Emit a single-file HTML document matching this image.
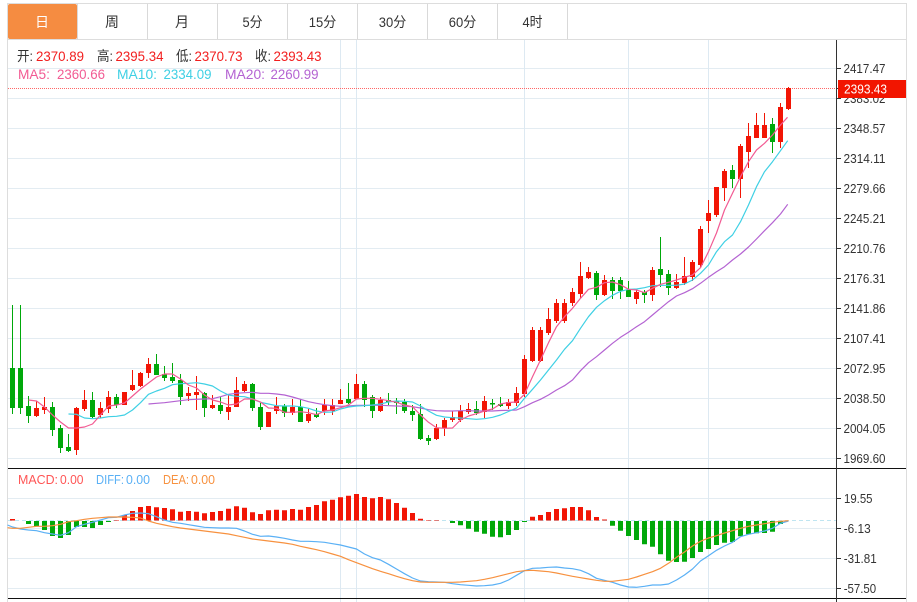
<!DOCTYPE html>
<html><head><meta charset="utf-8"><style>
html,body{margin:0;padding:0;background:#fff;width:917px;height:602px;overflow:hidden}
svg{display:block}
text{font-family:"Liberation Sans","Noto Sans CJK SC",sans-serif}
.t{font-size:14px;fill:#333;text-anchor:middle}
.l{font-size:14px}
.a{font-size:13px;fill:#333}
.m{font-size:13px}
</style></head><body>
<svg width="917" height="602" viewBox="0 0 917 602" xmlns="http://www.w3.org/2000/svg">
<rect width="917" height="602" fill="#fff"/>
<!-- grid -->
<path d="M8 68.5H836M8 98.5H836M8 128.5H836M8 158.5H836M8 188.5H836M8 218.5H836M8 248.5H836M8 278.5H836M8 308.5H836M8 338.5H836M8 368.5H836M8 398.5H836M8 428.5H836M8 458.5H836M8 498.5H836M8 528.5H836M8 558.5H836M8 588.5H836" stroke="#e3ecf2" fill="none"/>
<path d="M340.5 40V602M356.5 40V602M524.5 40V602M628.5 40V602M708.5 40V602" stroke="#dde9f2" fill="none"/>
<!-- tabs -->
<path d="M7 3.5H906.5M7 39.5H906.5M7.5 3V602M906.5 3V602" stroke="#ddd" fill="none"/>
<path d="M147.5 4V39M217.5 4V39M287.5 4V39M357.5 4V39M427.5 4V39M497.5 4V39M567.5 4V39M77.5 4V39" stroke="#d9d9d9" fill="none"/>
<rect x="8" y="4" width="69" height="35" rx="2" fill="#f58c41"/>
<text class="t" x="42" y="27" style="fill:#fff">日</text>
<text class="t" x="112" y="27">周</text>
<text class="t" x="182" y="27">月</text>
<text class="t" x="252.5" y="27" textLength="20" lengthAdjust="spacingAndGlyphs">5分</text>
<text class="t" x="322.5" y="27" textLength="27.5" lengthAdjust="spacingAndGlyphs">15分</text>
<text class="t" x="392.5" y="27" textLength="27.5" lengthAdjust="spacingAndGlyphs">30分</text>
<text class="t" x="462.5" y="27" textLength="27.5" lengthAdjust="spacingAndGlyphs">60分</text>
<text class="t" x="532.5" y="27" textLength="20" lengthAdjust="spacingAndGlyphs">4时</text>
<!-- dotted price line -->
<path d="M8 88.5H836" stroke="#f66" stroke-dasharray="1 1" fill="none"/>
<!-- candles -->
<g fill="none" stroke="#00a80a">
<path stroke-width="1" d="M12.5 305V414M20.5 305V414M28.5 396V423M52.5 402V436M60.5 425V453M68.5 434V452M92.5 392V418M116.5 394V408M156.5 354V375M164.5 366V381M172.5 363V383M180.5 374V405M204.5 392V417M220.5 397V414M252.5 383V411M260.5 403V430M284.5 404V417M300.5 399V422M316.5 408V418M348.5 383V404M364.5 381V407M372.5 395V418M388.5 393V405M396.5 398V414M404.5 399V413M412.5 405V421M420.5 404V440M428.5 435V445M476.5 401V415M492.5 399V410M500.5 397V407M596.5 271V300M612.5 277V299M620.5 277V299M628.5 281V297M644.5 290V303M660.5 237V287M668.5 270V295M732.5 165V188M772.5 118V153"/>
<path stroke-width="5" d="M12.5 368V408M20.5 368V408M28.5 406V416M52.5 407V430M60.5 428V448M68.5 447V451M92.5 400V417M116.5 397V405M156.5 364V375M164.5 374V378M172.5 377V381M180.5 380V397M204.5 393V408M220.5 405V411M252.5 384V408M260.5 407V427M284.5 406V413M300.5 407V422M316.5 414V417M348.5 399V403M364.5 384V400M372.5 397V411M388.5 400V402M396.5 401V403M404.5 402V411M412.5 411V415M420.5 414V439M428.5 438V441M476.5 409V413M492.5 403V404.5M500.5 404V406M596.5 273V295M612.5 280V291M620.5 280V291M628.5 290V297M644.5 292V295M660.5 269V275M668.5 274V288M732.5 170V179M772.5 124V142"/>
</g>
<g fill="none" stroke="#f21505">
<path stroke-width="1" d="M36.5 401V417M44.5 397V414M76.5 407V455M84.5 390V411M100.5 402V418M108.5 391V413M124.5 392V405M132.5 370V391M140.5 372V387M148.5 358V378M188.5 387V401M196.5 376V410M212.5 395V409M228.5 395V420M236.5 377V407M244.5 381V392M268.5 412V427M276.5 397V414M292.5 399V415M308.5 409V423M324.5 399V415M332.5 399V415M340.5 389V404M356.5 374V399M380.5 397V412M436.5 424V440M444.5 418V436M452.5 411V422M460.5 405V422M468.5 403V414M484.5 396V418M508.5 399V409M516.5 387V406M524.5 355V397M532.5 327V362M540.5 327V362M548.5 308V335M556.5 299V323M564.5 299V323M572.5 288V306M580.5 262V298M588.5 267V279M604.5 275V296M636.5 290V304M652.5 267V301M676.5 274V289M684.5 257V285M692.5 260V281M700.5 226V268M708.5 200V233M716.5 187V217M724.5 169V201M740.5 144V198M748.5 123V168M756.5 113V138M764.5 113V138M780.5 103V148M788.5 87V110"/>
<path stroke-width="5" d="M36.5 408V416M44.5 407V410M76.5 408V450M84.5 400V409M100.5 408V415M108.5 397V409M124.5 392V405M132.5 385V390M140.5 373V386M148.5 364V373M188.5 393V396M196.5 392V395M212.5 405V408M228.5 407V412M236.5 390V407M244.5 384V391M268.5 412V427M276.5 406V411M292.5 407V413M308.5 414V421M324.5 405V411M332.5 405V411M340.5 400V404M356.5 384V399M380.5 400V411M436.5 428V439M444.5 420V428M452.5 417V420M460.5 411V420M468.5 409V412M484.5 401V412M508.5 402V406M516.5 393V403M524.5 359V394M532.5 330V361M540.5 330V361M548.5 319V333M556.5 303V321M564.5 303V321M572.5 292V303M580.5 276V294M588.5 272V278M604.5 280V295M636.5 292V299M652.5 270V295M676.5 282V288M684.5 276V283M692.5 262V277M700.5 229V265M708.5 213V221M716.5 187V215M724.5 171V188M740.5 146V179M748.5 136V152M756.5 125V138M764.5 125V138M780.5 107V142M788.5 88V109"/>
</g>
<!-- MA lines -->
<g fill="none" stroke-width="1.2" stroke-linejoin="round">
<polyline stroke="#b463d2" points="148.5,404 156.5,403.3 164.5,402.7 172.5,401.7 180.5,400.7 188.5,399.7 196.5,399.3 204.5,399 212.5,398.7 220.5,396.7 228.5,394.3 236.5,393.3 244.5,392.7 252.5,392.3 260.5,393.3 268.5,393.3 276.5,394 284.5,395 292.5,397 300.5,399.3 308.5,401.7 316.5,403.3 324.5,404.7 332.5,405.7 340.5,406.3 348.5,406 356.5,405.3 364.5,405.3 372.5,405.3 380.5,405.3 388.5,405.7 396.5,406 404.5,406.3 412.5,406.7 420.5,408 428.5,409.7 436.5,410.7 444.5,411 452.5,411 460.5,410.7 468.5,410.7 476.5,411 484.5,411 492.5,411 500.5,410.5 508.5,410.3 516.5,410 524.5,406.7 532.5,402.7 540.5,399.3 548.5,395 556.5,390 564.5,385.7 572.5,380 580.5,370.7 588.5,362.7 596.5,356.7 604.5,350 612.5,343.3 620.5,337.3 628.5,332.3 636.5,326.7 644.5,321.7 652.5,315 660.5,308.3 668.5,301.7 676.5,296 684.5,292.7 692.5,288.7 700.5,283.3 708.5,277.3 716.5,271.7 724.5,266.7 732.5,260 740.5,254 748.5,247 756.5,239 764.5,230.7 772.5,222.7 780.5,214 787.7,204.3"/>
<polyline stroke="#3fd0e4" points="68.5,414 76.5,414.3 84.5,418 92.5,418.7 100.5,418 108.5,416.7 116.5,416.3 124.5,415 132.5,410 140.5,402.7 148.5,394.3 156.5,391 164.5,388.3 172.5,384.7 180.5,383.7 188.5,383.3 196.5,382.7 204.5,384 212.5,386 220.5,391 228.5,395 236.5,396.3 244.5,396.7 252.5,399 260.5,402.3 268.5,404 276.5,405.7 284.5,406 292.5,406 300.5,406.7 308.5,408.3 316.5,411 324.5,412.3 332.5,412 340.5,409 348.5,407 356.5,406 364.5,405.7 372.5,405 380.5,404 388.5,402 396.5,401 404.5,401.3 412.5,402 420.5,406 428.5,411 436.5,415.3 444.5,417 452.5,417.7 460.5,418 468.5,418.7 476.5,419.3 484.5,418.7 492.5,417.3 500.5,415 508.5,411.5 516.5,408 524.5,398.3 532.5,389.3 540.5,380 548.5,370 556.5,360 564.5,349.3 572.5,340.7 580.5,328.3 588.5,316.7 596.5,307.3 604.5,300.7 612.5,295.3 620.5,291.3 628.5,289.3 636.5,289 644.5,287.7 652.5,285.7 660.5,285.3 668.5,285.3 676.5,285.3 684.5,284 692.5,280 700.5,273.3 708.5,265 716.5,251.7 724.5,241.7 732.5,235 740.5,221.7 748.5,205 756.5,186.7 764.5,171.7 772.5,161.7 780.5,150.7 787.7,140.7"/>
<polyline stroke="#f25b93" points="28.5,400 36.5,401 44.5,407 52.5,415 60.5,422 68.5,428 76.5,428 84.5,427 92.5,424 100.5,415 108.5,406 116.5,405 124.5,403 132.5,396 140.5,389 148.5,383 156.5,377 164.5,374 172.5,374 180.5,379 188.5,385 196.5,388 204.5,395 212.5,400 220.5,402 228.5,405 236.5,404 244.5,399 252.5,399 260.5,402 268.5,408 276.5,408.3 284.5,412.3 292.5,412.3 300.5,411.7 308.5,412.7 316.5,414.7 324.5,411 332.5,410 340.5,407.7 348.5,405 356.5,399 364.5,398.3 372.5,398.3 380.5,399.3 388.5,400.7 396.5,402.3 404.5,405 412.5,406.7 420.5,415 428.5,422.3 436.5,427.7 444.5,428.3 452.5,428 460.5,420 468.5,416 476.5,413.7 484.5,411 492.5,409 500.5,404 508.5,402.5 516.5,402 524.5,394.3 532.5,376.7 540.5,360 548.5,342.7 556.5,326.7 564.5,316.7 572.5,308.3 580.5,298.3 588.5,289.3 596.5,287.3 604.5,282.7 612.5,282 620.5,284.7 628.5,289.3 636.5,290 644.5,292.7 652.5,288.3 660.5,284.3 668.5,282.3 676.5,280 684.5,277.3 692.5,275 700.5,267.7 708.5,251.7 716.5,233 724.5,210 732.5,193.3 740.5,176.7 748.5,161.7 756.5,150 764.5,143.3 772.5,135 780.5,125 787.5,117.3"/>
</g>
<!-- MACD zero -->
<path d="M8 520.5H836" stroke="#bfe5f1" stroke-dasharray="4 3" fill="none"/>
<!-- MACD bars -->
<path fill="none" stroke="#00a80a" stroke-width="5" d="M28.5 521V524M36.5 521V526M44.5 521V530M52.5 521V536M60.5 521V538M68.5 521V535M76.5 521V527M84.5 521V527M92.5 521V528M100.5 521V525M108.5 521V522M452.5 521V523M460.5 521V525.3M468.5 521V528.7M476.5 521V531.7M484.5 521V533.7M492.5 521V536.7M500.5 521V537.3M508.5 521V535M516.5 521V530M524.5 521V522M612.5 521V525.7M620.5 521V530.7M628.5 521V536M636.5 521V540M644.5 521V544.3M652.5 521V546.7M660.5 521V554.3M668.5 521V560.7M676.5 521V562M684.5 521V561.7M692.5 521V558M700.5 521V552M708.5 521V549M716.5 521V545M724.5 521V542.7M732.5 521V542M740.5 521V536.3M748.5 521V534.3M756.5 521V533.3M764.5 521V533M772.5 521V531.7M780.5 521V524"/>
<path fill="none" stroke="#f21505" stroke-width="5" d="M12.5 519V520.5M116.5 520V520.5M124.5 515V520.5M132.5 511V520.5M140.5 507V520.5M148.5 506V520.5M156.5 507.3V520.5M164.5 508V520.5M172.5 509.3V520.5M180.5 511.7V520.5M188.5 511V520.5M196.5 511.7V520.5M204.5 513.3V520.5M212.5 512V520.5M220.5 511V520.5M228.5 508.7V520.5M236.5 506.3V520.5M244.5 507.7V520.5M252.5 512.3V520.5M260.5 514V520.5M268.5 510.3V520.5M276.5 509.7V520.5M284.5 510.3V520.5M292.5 509V520.5M300.5 509.7V520.5M308.5 507V520.5M316.5 505V520.5M324.5 501.3V520.5M332.5 499.7V520.5M340.5 497.3V520.5M348.5 495.7V520.5M356.5 494V520.5M364.5 497V520.5M372.5 498.3V520.5M380.5 497V520.5M388.5 499.3V520.5M396.5 503V520.5M404.5 507.7V520.5M412.5 513V520.5M420.5 518.7V520.5M428.5 520V520.5M436.5 520V520.5M532.5 516.7V520.5M540.5 515V520.5M548.5 512V520.5M556.5 509V520.5M564.5 508.3V520.5M572.5 507V520.5M580.5 507V520.5M588.5 510.3V520.5M596.5 517V520.5M604.5 519.5V520.5"/>
<!-- DIFF DEA -->
<g fill="none" stroke-width="1.2" stroke-linejoin="round">
<polyline stroke="#5ab0f5" points="7.5,525 12.5,527 20.5,529 28.5,530 36.5,530.7 44.5,532.7 52.5,534 60.5,535.3 68.5,532.7 76.5,526.7 84.5,524.3 92.5,522.3 100.5,520 108.5,517.7 116.5,517.3 124.5,515 132.5,513.3 140.5,513 148.5,513.7 156.5,516.7 164.5,520 172.5,522.3 180.5,523.3 188.5,524.7 196.5,526 204.5,527.3 212.5,527.7 220.5,528 228.5,528 236.5,528.3 244.5,531 252.5,534.3 260.5,536.3 268.5,536 276.5,537 284.5,538.3 292.5,540 300.5,541.3 308.5,541.3 316.5,541.7 324.5,542.3 332.5,543.7 340.5,545 348.5,547 356.5,549 364.5,554 372.5,557.7 380.5,560 388.5,564.3 396.5,569 404.5,573.7 412.5,578 420.5,581 428.5,581.7 436.5,582 444.5,582.3 452.5,583.7 460.5,584.7 468.5,585.3 476.5,586 484.5,585.7 492.5,585 500.5,583.3 508.5,580 516.5,575.3 524.5,570.7 532.5,568.3 540.5,568 548.5,567.3 556.5,567 564.5,568 572.5,568.7 580.5,570.3 588.5,573.7 596.5,578.3 604.5,580.3 612.5,582.3 620.5,585 628.5,587 636.5,587.3 644.5,586.3 652.5,585 660.5,585 668.5,584 676.5,580 684.5,575 692.5,569 700.5,561 708.5,555.7 716.5,550.3 724.5,546 732.5,542.3 740.5,536.7 748.5,534.3 756.5,532.7 764.5,531 772.5,528.3 780.5,523.3 788.5,521"/>
<polyline stroke="#f7913f" points="7.5,527.7 12.5,528.3 20.5,528.3 28.5,527.3 36.5,526.3 44.5,526.3 52.5,525.7 60.5,524.3 68.5,521.7 76.5,520.7 84.5,519.3 92.5,518.3 100.5,517.7 108.5,517 116.5,517 124.5,517 132.5,517.3 140.5,518 148.5,521 156.5,523.3 164.5,525 172.5,526.7 180.5,528 188.5,529 196.5,530 204.5,531 212.5,532 220.5,533 228.5,534 236.5,535.7 244.5,537.3 252.5,539 260.5,540 268.5,541 276.5,542 284.5,543 292.5,544.3 300.5,546.3 308.5,548 316.5,549.7 324.5,551.7 332.5,554 340.5,556.3 348.5,559.7 356.5,562.7 364.5,565.7 372.5,568.7 380.5,571.3 388.5,573.7 396.5,576.3 404.5,578.7 412.5,580.7 420.5,582 428.5,582.3 436.5,582.3 444.5,582.3 452.5,582.3 460.5,582 468.5,581.3 476.5,580.7 484.5,579.3 492.5,577.7 500.5,575.7 508.5,573.7 516.5,571.7 524.5,570.7 532.5,570.3 540.5,571 548.5,571.7 556.5,573 564.5,574.7 572.5,576.3 580.5,577.7 588.5,579 596.5,580.3 604.5,581.3 612.5,581.3 620.5,580.3 628.5,579.3 636.5,577 644.5,574.3 652.5,571.7 660.5,568.3 668.5,563.3 676.5,557.3 684.5,552 692.5,546 700.5,541.3 708.5,538 716.5,535.7 724.5,533 732.5,530.7 740.5,528.3 748.5,526.3 756.5,525 764.5,523.7 772.5,522.3 780.5,521.3 788.5,520.7"/>
</g>
<!-- frame lines -->
<path d="M8 468.5H906M8 598.5H906" stroke="#111" fill="none"/>
<path d="M836.5 40V602" stroke="#333" fill="none"/>
<path d="M837 68.5H841M837 88.5H841M837 98.5H841M837 128.5H841M837 158.5H841M837 188.5H841M837 218.5H841M837 248.5H841M837 278.5H841M837 308.5H841M837 338.5H841M837 368.5H841M837 398.5H841M837 428.5H841M837 458.5H841M837 498.5H841M837 528.5H841M837 558.5H841M837 588.5H841" stroke="#333" fill="none"/>
<!-- axis labels -->
<text class="a" x="843.5" y="73" textLength="42" lengthAdjust="spacingAndGlyphs">2417.47</text>
<text class="a" x="843.5" y="103" textLength="42" lengthAdjust="spacingAndGlyphs">2383.02</text>
<text class="a" x="843.5" y="133" textLength="42" lengthAdjust="spacingAndGlyphs">2348.57</text>
<text class="a" x="843.5" y="163" textLength="42" lengthAdjust="spacingAndGlyphs">2314.11</text>
<text class="a" x="843.5" y="193" textLength="42" lengthAdjust="spacingAndGlyphs">2279.66</text>
<text class="a" x="843.5" y="223" textLength="42" lengthAdjust="spacingAndGlyphs">2245.21</text>
<text class="a" x="843.5" y="253" textLength="42" lengthAdjust="spacingAndGlyphs">2210.76</text>
<text class="a" x="843.5" y="283" textLength="42" lengthAdjust="spacingAndGlyphs">2176.31</text>
<text class="a" x="843.5" y="313" textLength="42" lengthAdjust="spacingAndGlyphs">2141.86</text>
<text class="a" x="843.5" y="343" textLength="42" lengthAdjust="spacingAndGlyphs">2107.41</text>
<text class="a" x="843.5" y="373" textLength="42" lengthAdjust="spacingAndGlyphs">2072.95</text>
<text class="a" x="843.5" y="403" textLength="42" lengthAdjust="spacingAndGlyphs">2038.50</text>
<text class="a" x="843.5" y="433" textLength="42" lengthAdjust="spacingAndGlyphs">2004.05</text>
<text class="a" x="843.5" y="463" textLength="42" lengthAdjust="spacingAndGlyphs">1969.60</text>
<text class="a" x="844" y="503" textLength="28.5" lengthAdjust="spacingAndGlyphs">19.55</text>
<text class="a" x="843.7" y="533" textLength="27" lengthAdjust="spacingAndGlyphs">-6.13</text>
<text class="a" x="843.7" y="563" textLength="33" lengthAdjust="spacingAndGlyphs">-31.81</text>
<text class="a" x="843.7" y="593" textLength="32.5" lengthAdjust="spacingAndGlyphs">-57.50</text>
<rect x="838" y="80" width="68" height="18" fill="#f21500"/>
<text class="a" x="844" y="93.5" textLength="43" lengthAdjust="spacingAndGlyphs" style="fill:#fff">2393.43</text>
<!-- legend -->
<g class="l">
<text x="17" y="61" fill="#333" textLength="16" lengthAdjust="spacingAndGlyphs">开:</text><text x="36" y="61" fill="#f21e1e" textLength="48" lengthAdjust="spacingAndGlyphs">2370.89</text>
<text x="97" y="61" fill="#333" textLength="16" lengthAdjust="spacingAndGlyphs">高:</text><text x="115.5" y="61" fill="#f21e1e" textLength="48" lengthAdjust="spacingAndGlyphs">2395.34</text>
<text x="176" y="61" fill="#333" textLength="16" lengthAdjust="spacingAndGlyphs">低:</text><text x="194.5" y="61" fill="#f21e1e" textLength="48" lengthAdjust="spacingAndGlyphs">2370.73</text>
<text x="255" y="61" fill="#333" textLength="16" lengthAdjust="spacingAndGlyphs">收:</text><text x="273.5" y="61" fill="#f21e1e" textLength="48" lengthAdjust="spacingAndGlyphs">2393.43</text>
<text x="18" y="79" fill="#f25b93" textLength="32" lengthAdjust="spacingAndGlyphs">MA5:</text><text x="57" y="79" fill="#f25b93" textLength="48" lengthAdjust="spacingAndGlyphs">2360.66</text>
<text x="117" y="79" fill="#3fd0e4" textLength="40" lengthAdjust="spacingAndGlyphs">MA10:</text><text x="163.5" y="79" fill="#3fd0e4" textLength="48" lengthAdjust="spacingAndGlyphs">2334.09</text>
<text x="225" y="79" fill="#b463d2" textLength="40" lengthAdjust="spacingAndGlyphs">MA20:</text><text x="270.5" y="79" fill="#b463d2" textLength="48" lengthAdjust="spacingAndGlyphs">2260.99</text>
</g>
<g class="m">
<text x="18" y="484" fill="#f55" textLength="40" lengthAdjust="spacingAndGlyphs">MACD:</text><text x="60" y="484" fill="#f55" textLength="23.5" lengthAdjust="spacingAndGlyphs">0.00</text>
<text x="96" y="484" fill="#5ab0f5" textLength="28" lengthAdjust="spacingAndGlyphs">DIFF:</text><text x="126" y="484" fill="#5ab0f5" textLength="24" lengthAdjust="spacingAndGlyphs">0.00</text>
<text x="163" y="484" fill="#f7913f" textLength="26" lengthAdjust="spacingAndGlyphs">DEA:</text><text x="191" y="484" fill="#f7913f" textLength="24" lengthAdjust="spacingAndGlyphs">0.00</text>
</g>
</svg>
</body></html>
